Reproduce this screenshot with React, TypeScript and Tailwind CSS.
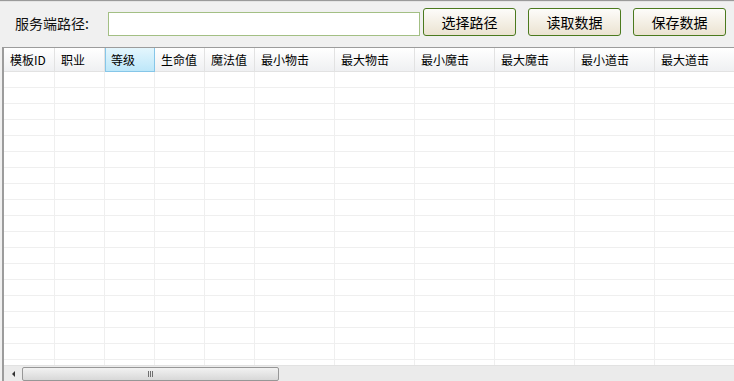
import React from 'react'

const columns = [
  { name: '模板ID', w: 'w-[51px]' },
  { name: '职业', w: 'w-[50px]' },
  { name: '等级', w: 'w-[50px]', active: true },
  { name: '生命值', w: 'w-[50px]' },
  { name: '魔法值', w: 'w-[50px]' },
  { name: '最小物击', w: 'w-[80px]' },
  { name: '最大物击', w: 'w-[80px]' },
  { name: '最小魔击', w: 'w-[80px]' },
  { name: '最大魔击', w: 'w-[80px]' },
  { name: '最小道击', w: 'w-[80px]' },
  { name: '最大道击', w: 'w-[80px]' },
]

const rows = Array.from({ length: 19 }, (_, i) => i)

function WinButton({ label }: { label: string }) {
  return (
    <button className="mt-[6px] w-[93px] h-[28px] shrink-0 rounded-[3px] border border-[#4b7a1e] bg-gradient-to-b from-[#fdfcfa] to-[#ebe3d1] text-[14px] leading-none text-black">
      {label}
    </button>
  )
}

export default function App() {
  return (
    <div className="w-[734px] h-[381px] bg-[#f0f0f0] overflow-hidden flex flex-col font-['Noto_Sans_CJK_SC',sans-serif]">
      {/* top window edge */}
      <div className="h-[2px] border-t border-[#9a9a9a] bg-[#e4e4e4]" />

      {/* path bar */}
      <div className="h-[45px] flex items-start shrink-0">
        <span className="ml-[15px] mt-[12px] w-[93px] shrink-0 text-[14px] leading-[18px] text-[#111]">服务端路径:</span>
        <input className="mt-[10px] w-[312px] h-[24px] shrink-0 border border-[#a3bf84] bg-white outline-none" />
        <div className="ml-[3px] flex gap-[12px]">
          <WinButton label="选择路径" />
          <WinButton label="读取数据" />
          <WinButton label="保存数据" />
        </div>
      </div>

      {/* data grid */}
      <div className="flex-1 min-h-0 ml-[2px] flex flex-col border-t border-l-2 border-[#9c9c9c] bg-white overflow-hidden">
        <div className="flex h-[24px] shrink-0">
          {columns.map(c => (
            <div
              key={c.name}
              className={
                c.active
                  ? `${c.w} shrink-0 h-full pl-[5px] flex items-center text-[12px] text-black border-x border-b border-[#86c6e8] bg-gradient-to-b from-[#e4f6fd] to-[#bde7f9]`
                  : `${c.w} shrink-0 h-full pl-[6px] flex items-center text-[12px] text-black border-r border-b border-[#e2e2e2] bg-gradient-to-b from-[#ffffff] to-[#eff0f2]`
              }
            >
              {c.name}
            </div>
          ))}
        </div>
        <div className="flex-1 min-h-0 overflow-hidden">
          {rows.map(r => (
            <div key={r} className="flex h-[16px]">
              {columns.map(c => (
                <div key={c.name} className={`${c.w} shrink-0 h-full border-r border-b border-[#efefef]`} />
              ))}
            </div>
          ))}
        </div>

        {/* horizontal scrollbar */}
        <div className="h-[16px] shrink-0 flex items-center border-t border-[#e2e2e2] bg-[#ebebeb]">
          <div className="w-[18px] h-full flex items-center justify-center">
            <div className="w-0 h-0 border-y-[3px] border-y-transparent border-r-[3px] border-r-[#333]" />
          </div>
          <div className="w-[257px] h-[14px] rounded-[2px] border border-[#979797] bg-gradient-to-b from-[#f2f2f2] to-[#d8d8d8] flex items-center justify-center">
            <div className="flex gap-[1px]">
              <div className="w-[1px] h-[6px] bg-[#6f6f6f]" />
              <div className="w-[1px] h-[6px] bg-[#6f6f6f]" />
              <div className="w-[1px] h-[6px] bg-[#6f6f6f]" />
            </div>
          </div>
        </div>
      </div>
    </div>
  )
}
